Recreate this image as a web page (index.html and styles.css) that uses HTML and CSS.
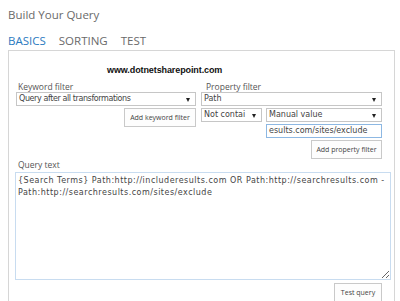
FILE: index.html
```html
<!DOCTYPE html>
<html lang="en">
  <head>
    <meta charset="UTF-8" />
    <title>Build Your Query</title>
    <link rel="stylesheet" href="styles.css">
  </head>
  <body>
    <h1 class="title">Build Your Query</h1>
    <nav class="tabs">
      <span class="tab active">BASICS</span>
      <span class="tab">SORTING</span>
      <span class="tab">TEST</span>
    </nav>

    <div class="panel">
      <div class="brand">www.dotnetsharepoint.com</div>

      <div class="filters">
        <div class="filter-col">
          <div class="label">Keyword filter</div>
          <div class="select select-keyword">Query after all transformations<span class="arrow"></span></div>
          <div class="actions">
            <button class="btn btn-keyword">Add keyword filter</button>
          </div>
        </div>

        <div class="filter-col">
          <div class="label label-prop">Property filter</div>
          <div class="select">Path<span class="arrow"></span></div>
          <div class="row">
            <div class="select select-op">Not contai<span class="arrow"></span></div>
            <div class="select select-val">Manual value<span class="arrow"></span></div>
          </div>
          <div class="row row-end">
            <div class="value-input">esults.com/sites/exclude</div>
          </div>
          <div class="actions">
            <button class="btn btn-prop">Add property filter</button>
          </div>
        </div>
      </div>

      <div class="query">
        <div class="label">Query text</div>
        <textarea class="query-text">{Search Terms} Path:http://includeresults.com OR Path:http://searchresults.com -
Path:http://searchresults.com/sites/exclude</textarea>
        <div class="actions actions-test">
          <button class="btn btn-test">Test query</button>
        </div>
      </div>
    </div>
  </body>
</html>
```

FILE: styles.css
```css
  body {
    margin: 0;
    padding: 0;
    background-color: #ffffff;
    font-family: "Open Sans", "Liberation Sans", sans-serif;
    color: #444;
    overflow: hidden;
  }

  .title {
    margin: 5px 0 0 8px;
    font-size: 11.5px;
    line-height: 20px;
    font-weight: normal;
    color: #6a6a6a;
  }

  .tabs {
    display: flex;
    gap: 13px;
    margin: 7px 0 0 8px;
    line-height: 18px;
    font-size: 11.5px;
  }
  .tab { color: #6a6a6a; }
  .tab.active { color: #2a7ac0; }

  .panel {
    margin: 0 5px 0 8px;
    height: 260px;
    border: 1px solid #d6d6d6;
    border-bottom: none;
    padding: 0 4px 0 7px;
  }

  .brand {
    margin-top: 12px;
    padding-left: 91px;
    line-height: 14px;
    font-family: "Liberation Sans", Arial, sans-serif;
    font-weight: bold;
    font-size: 9px;
    letter-spacing: -0.1px;
    color: #111;
  }

  .filters {
    display: grid;
    grid-template-columns: 180px 181px;
    column-gap: 5px;
    margin-top: 4px;
  }

  .label {
    font-size: 8.5px;
    line-height: 11px;
    padding-left: 2px;
    color: #555;
  }
  .label-prop { padding-left: 5px; }

  .select {
    position: relative;
    height: 14px;
    box-sizing: border-box;
    border: 1px solid #c6c6c6;
    padding-left: 2px;
    font-family: "DejaVu Sans", Verdana, sans-serif;
    font-size: 8px;
    line-height: 12px;
    color: #444;
    white-space: nowrap;
    overflow: hidden;
  }
  .select-keyword { letter-spacing: -0.4px; }

  /* small dropdown triangle */
  .arrow {
    position: absolute;
    right: 5px;
    top: 5px;
    border-left: 2.5px solid transparent;
    border-right: 2.5px solid transparent;
    border-top: 4px solid #222;
  }

  .row {
    display: flex;
    gap: 4px;
    margin-top: 2px;
  }
  .row-end { justify-content: flex-end; }
  .select-op { width: 61px; }
  .select-val { flex: 1; }

  .value-input {
    width: 116px;
    height: 14px;
    box-sizing: border-box;
    border: 1px solid #8db8e3;
    padding-left: 2px;
    font-family: "DejaVu Sans", Verdana, sans-serif;
    font-size: 8px;
    line-height: 12px;
    color: #444;
    white-space: nowrap;
    overflow: hidden;
  }

  .actions {
    display: flex;
    justify-content: flex-end;
    margin-top: 2px;
  }

  .btn {
    height: 19px;
    padding: 0;
    border: 1px solid #c9c9c9;
    background-color: #fdfdfd;
    font-family: "Open Sans", "Liberation Sans", sans-serif;
    font-size: 7px;
    color: #444;
  }
  .btn-keyword { width: 72px; }
  .btn-prop { width: 71px; }
  .btn-test { width: 48px; }

  .query-text {
    display: block;
    width: 376px;
    height: 108px;
    box-sizing: border-box;
    margin: 2px 0 0 -1px;
    padding: 2px 2px;
    border: 1px solid #c8dcf0;
    font-family: "DejaVu Sans", Verdana, sans-serif;
    font-size: 8px;
    line-height: 12px;
    letter-spacing: 0.5px;
    color: #444;
    white-space: pre;
    overflow: hidden;
  }

  .actions-test {
    margin-top: 3px;
    padding-right: 8px;
  }
```
